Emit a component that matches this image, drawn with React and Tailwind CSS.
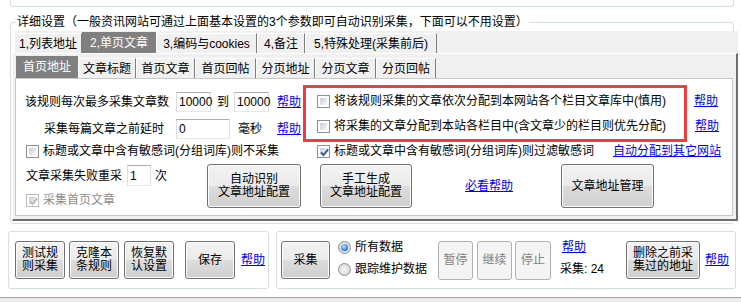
import React from "react";

function Check({ checked, disabled }) {
  return (
    <span
      className={`relative inline-flex items-center justify-center w-[13px] h-[13px] shrink-0 border bg-white p-[2px] ${
        disabled ? "border-[#bcbcbc]" : "border-[#8e8f8f]"
      }`}
    >
      <span className="block w-full h-full bg-[linear-gradient(135deg,#c9cdd2,#f7f7f7)]" />
      {checked && (
        <svg className="absolute left-[1px] top-[1px]" width="11" height="11" viewBox="0 0 11 11">
          <path
            d="M2 5.3 L4.4 8 L9.2 2.4"
            fill="none"
            stroke={disabled ? "#b9b9b9" : "#3551a3"}
            strokeWidth="1.9"
          />
        </svg>
      )}
    </span>
  );
}

function Radio({ checked }) {
  return (
    <span className="w-[13px] h-[13px] shrink-0 rounded-full border border-[#8e8f8f] bg-[radial-gradient(circle_at_50%_50%,#f6f6f6,#d0d0d0)] flex items-center justify-center">
      {checked && (
        <span className="w-[7px] h-[7px] rounded-full bg-[radial-gradient(circle_at_40%_35%,#b5e6ff,#1a6fd4_75%)]" />
      )}
    </span>
  );
}

function Btn({ children, className = "", disabled }) {
  return (
    <div
      className={`flex items-center justify-center text-center leading-[13px] rounded-[3px] border shrink-0 ${
        disabled
          ? "border-[#adb2b5] bg-[#f4f4f4] text-[#838383]"
          : "border-[#707070] bg-[linear-gradient(#f2f2f2_0%,#ebebeb_50%,#dddddd_50%,#cfcfcf_100%)] shadow-[inset_0_0_0_1px_#fcfcfc]"
      } ${className}`}
    >
      <span>{children}</span>
    </div>
  );
}

function Input({ children, className = "" }) {
  return (
    <div
      className={`h-[20px] shrink-0 border border-t-[#abadb3] border-l-[#dcdde3] border-r-[#dbdfe6] border-b-[#e3e9ef] bg-white flex items-center pl-[2px] ${className}`}
    >
      {children}
    </div>
  );
}

function A({ children, className = "" }) {
  return <span className={`text-[#0000ff] underline ${className}`}>{children}</span>;
}

const outerTabs = [
  { label: "1,列表地址", w: "w-[68px]" },
  { label: "2,单页文章", w: "w-[74px]", sel: true },
  { label: "3,编码与cookies", w: "w-[101px]" },
  { label: "4,备注", w: "w-[48px]" },
  { label: "5,特殊处理(采集前后)", w: "w-[132px]" },
];

const innerTabs = [
  { label: "首页地址", w: "w-[62px]", sel: true },
  { label: "文章标题", w: "w-[58px]" },
  { label: "首页文章", w: "w-[59px]" },
  { label: "首页回帖", w: "w-[61px]" },
  { label: "分页地址", w: "w-[59px]" },
  { label: "分页文章", w: "w-[61px]" },
  { label: "分页回帖", w: "w-[60px]" },
];

function Tab({ label, w, sel, selH, h }) {
  if (sel)
    return (
      <div className={`${w} ${selH} shrink-0 bg-[#808080] text-white flex items-center justify-center`}>
        {label}
      </div>
    );
  return (
    <div
      className={`${w} ${h} shrink-0 border-t border-l border-r border-t-white border-l-white border-r-[#7f7f7f] flex items-center justify-center`}
    >
      {label}
    </div>
  );
}

export default function App() {
  return (
    <div className="w-[741px] h-[302px] overflow-hidden bg-white text-[12px] leading-[16px] text-black font-['Liberation_Sans','Noto_Sans_CJK_SC',sans-serif] flex flex-col">
      <div className="ml-[10px] w-[724px] h-[7px] shrink-0 border-x border-b border-[#d5dfe5] rounded-b-[3px]" />

      <fieldset className="mt-[7px] ml-[10px] w-[724px] min-w-0 shrink-0 border border-[#d5dfe5] rounded-[3px] p-0 pb-[2px]">
        <legend className="ml-[5px] px-[1px] leading-[16px]">
          详细设置（一般资讯网站可通过上面基本设置的3个参数即可自动识别采集，下面可以不用设置）
        </legend>
        <div className="mt-[1px] w-[727px]">
          <div className="ml-[3px] h-[22px] bg-[#f0f0f0] flex items-end">
            {outerTabs.map((t) => (
              <Tab key={t.label} {...t} selH="h-[21px]" h="h-[20px]" />
            ))}
          </div>
          <div className="ml-[1px] w-[726px] h-[168px] bg-[#f0f0f0] border-t border-l border-r-2 border-b-2 border-t-white border-l-white border-r-[#6f6f6f] border-b-[#6f6f6f]">
            <div className="ml-[2px] pl-[1px] h-[24px] flex items-end">
              {innerTabs.map((t) => (
                <Tab key={t.label} {...t} selH="h-[22px]" h="h-[20px]" />
              ))}
            </div>
            <div className="ml-[2px] w-[718px] h-[138px] border border-[#c9c9c9] bg-white">
              {/* top block */}
              <div className="pl-[9px] pt-[6px] flex">
                <div className="w-[278px] shrink-0 pt-[7px]">
                  <div className="flex items-center h-[20px]">
                    <span className="w-[151px] shrink-0">该规则每次最多采集文章数</span>
                    <Input className="w-[35px]">10000</Input>
                    <span className="ml-[6px]">到</span>
                    <Input className="ml-[5px] w-[35px]">10000</Input>
                    <A className="ml-[8px]">帮助</A>
                  </div>
                  <div className="flex items-center h-[20px] mt-[7px]">
                    <span className="w-[151px] shrink-0 pl-[19px]">采集每篇文章之前延时</span>
                    <Input className="w-[54px]">0</Input>
                    <span className="ml-[8px]">毫秒</span>
                    <A className="ml-[15px]">帮助</A>
                  </div>
                </div>
                <div className="w-[384px] h-[57px] shrink-0 border-[3px] border-[#f03c3c] pl-[11px] pt-[3px]">
                  <div className="flex items-center h-[20px] gap-[4px]">
                    <Check />
                    <span>将该规则采集的文章依次分配到本网站各个栏目文章库中(慎用)</span>
                  </div>
                  <div className="flex items-center h-[20px] mt-[5px] gap-[4px]">
                    <Check />
                    <span>将采集的文章分配到本站各栏目中(含文章少的栏目则优先分配)</span>
                  </div>
                </div>
                <div className="ml-[7px] pt-[6px]">
                  <div className="h-[20px] flex items-center">
                    <A>帮助</A>
                  </div>
                  <div className="h-[20px] mt-[5px] ml-[1px] flex items-center">
                    <A>帮助</A>
                  </div>
                </div>
              </div>

              {/* checkbox row */}
              <div className="flex items-center h-[16px] mt-[1px] pl-[10px]">
                <div className="w-[291px] shrink-0 flex items-center gap-[4px]">
                  <Check />
                  <span>标题或文章中含有敏感词(分组词库)则不采集</span>
                </div>
                <Check checked />
                <span className="ml-[4px] w-[279px] shrink-0">标题或文章中含有敏感词(分组词库)则过滤敏感词</span>
                <A>自动分配到其它网站</A>
              </div>

              {/* bottom block */}
              <div className="flex mt-[5px] pl-[10px]">
                <div className="w-[181px] shrink-0">
                  <div className="flex items-center h-[21px] mt-[1px]">
                    <span className="w-[101px] shrink-0">文章采集失败重采</span>
                    <Input className="w-[24px] h-[21px]">1</Input>
                    <span className="ml-[4px]">次</span>
                  </div>
                  <div className="flex items-center h-[16px] mt-[6px] gap-[4px] text-[#8d8d8d]">
                    <Check checked disabled />
                    <span>采集首页文章</span>
                  </div>
                </div>
                <Btn className="w-[94px] h-[44px]">
                  自动识别
                  <br />
                  文章地址配置
                </Btn>
                <Btn className="ml-[19px] w-[92px] h-[44px]">
                  手工生成
                  <br />
                  文章地址配置
                </Btn>
                <div className="ml-[53px] w-[48px] shrink-0 flex items-center">
                  <A>必看帮助</A>
                </div>
                <Btn className="ml-[48px] w-[93px] h-[44px]">文章地址管理</Btn>
              </div>
            </div>
          </div>
        </div>
      </fieldset>

      {/* bottom groups */}
      <div className="flex mt-[7px] h-[58px] shrink-0">
        <div className="ml-[8px] w-[261px] shrink-0 border border-[#d5dfe5] rounded-[3px] flex items-center pl-[6px]">
          <Btn className="w-[50px] h-[38px]">
            测试规
            <br />
            则采集
          </Btn>
          <Btn className="ml-[4px] w-[50px] h-[38px]">
            克隆本
            <br />
            条规则
          </Btn>
          <Btn className="ml-[5px] w-[50px] h-[38px]">
            恢复默
            <br />
            认设置
          </Btn>
          <Btn className="ml-[11px] w-[50px] h-[38px]">保存</Btn>
          <A className="ml-[6px]">帮助</A>
        </div>
        <div className="ml-[7px] w-[460px] shrink-0 border border-[#d5dfe5] rounded-[3px] flex items-center">
          <Btn className="ml-[4px] w-[49px] h-[38px]">采集</Btn>
          <div className="ml-[8px] w-[100px] shrink-0 self-start mt-[5px]">
            <div className="h-[20px] flex items-center gap-[4px]">
              <Radio checked />
              <span>所有数据</span>
            </div>
            <div className="h-[20px] mt-[2px] flex items-center gap-[4px]">
              <Radio />
              <span>跟踪维护数据</span>
            </div>
          </div>
          <Btn disabled className="w-[35px] h-[39px]">
            暂停
          </Btn>
          <Btn disabled className="ml-[4px] w-[35px] h-[39px]">
            继续
          </Btn>
          <Btn disabled className="ml-[3px] w-[36px] h-[39px]">
            停止
          </Btn>
          <div className="ml-[9px] w-[66px] shrink-0 self-start mt-[5px]">
            <div className="h-[20px] flex items-center pl-[2px]">
              <A>帮助</A>
            </div>
            <div className="h-[20px] mt-[2px] flex items-center">采集: 24</div>
          </div>
          <Btn className="w-[74px] h-[38px]">
            删除之前采
            <br />
            集过的地址
          </Btn>
          <A className="ml-[5px]">帮助</A>
        </div>
      </div>

      <div className="mt-[8px] flex-1 border-t border-t-[#a0a0a0] bg-[#ececec]" />
    </div>
  );
}
